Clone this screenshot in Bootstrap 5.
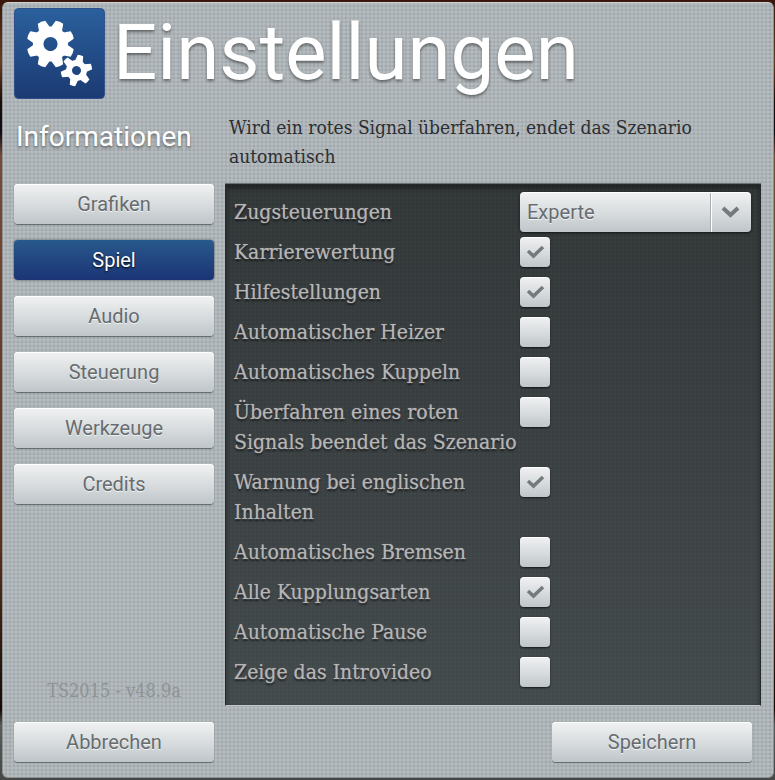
<!DOCTYPE html>
<html lang="de">
<head>
<meta charset="utf-8">
<meta name="viewport" content="width=device-width, initial-scale=1">
<title>Einstellungen</title>
<link rel="stylesheet" href="https://cdn.jsdelivr.net/npm/bootstrap@5.3.0/dist/css/bootstrap.min.css">
<style>
:root {
  --ui-font: Roboto, "Open Sans", sans-serif;
  --text-font: "DejaVu Serif Condensed", "DejaVu Serif", serif;
  --metal: linear-gradient(#f0f1f2, #d9dddf 50%, #bfc6c9);
}
body {
  font-family: var(--text-font);
  background: linear-gradient(#3a160c, #6b3a20 8%, #1a0d0a 13%, #0d0c14 17%, #7a4a38 20%, #5a3018 70%, #160a06 91%, #5a5b5b 93%, #454747);
}
.settings-window {
  min-height: calc(100vh - 4px);
  margin: 2px 1px 2px 2px;
  padding: 5px 12px 15px 11px;
  border: 1px solid #8c9294;
  border-top-color: #d0d3d2;
  border-radius: 6px;
  background:
    radial-gradient(circle at 1px 1px, #ffffff1c 1px, transparent 2px) 0 0 / 4px 4px,
    radial-gradient(circle at 3px 3px, #0000000f 1px, transparent 2px) 0 0 / 4px 4px,
    #adb4b7;
}
.app-icon { width: 91px; height: 91px; }
.app-title {
  font: 400 78px/90px var(--ui-font);
  color: #fff;
  text-shadow: 0 2px 3px #00000070;
}
.layout {
  display: grid;
  grid-template-columns: 200px minmax(0, 1fr);
  column-gap: 11px;
}
.main-area { padding-top: 14px; }
.side-title {
  padding: 4px 0 0 2px;
  font: 400 28px/40px var(--ui-font);
  color: #fff;
  text-shadow: 0 2px 3px #00000070;
}
.hint { margin-bottom: 13px; font-size: 19px; line-height: 29px; color: #2b2e32; }
.metal-btn {
  --bs-btn-color: #666c6f;
  --bs-btn-hover-color: #505659;
  --bs-btn-border-width: 0;
  --bs-btn-border-radius: 4px;
  height: 40px;
  padding: 0;
  font: 400 20px/40px var(--ui-font);
  background: var(--metal);
  text-shadow: 0 1px 0 #ffffffb0;
  box-shadow: inset 0 1px 0 #fff, 0 1px 1px #5e686c;
}
.metal-btn.active {
  --bs-btn-active-color: #fff;
  background: linear-gradient(#28598c, #1b3475);
  text-shadow: 0 1px 2px #000;
  box-shadow: 0 0 2px #303b42;
}
.version { font-size: 18px; line-height: 30px; color: #8d9396; }
.options {
  padding: 7px 9px 13px 8px;
  border: 1px solid #252a2c;
  border-bottom-color: #c2c8ca;
  background:
    radial-gradient(circle at 1px 1px, #ffffff06 1px, transparent 2px) 0 0 / 4px 4px,
    linear-gradient(#313637, #434a4c);
  box-shadow: inset 0 3px 5px #00000066, 0 -1px 0 #6c7375;
}
.option-row {
  display: grid;
  grid-template-columns: 286px minmax(0, 1fr);
  padding: 5px 0;
}
.option-row.has-select { padding: 0; }
.option-row label {
  font-size: 21px;
  line-height: 30px;
  color: #b5b5b5;
  text-shadow: 0 0 1px #b5b5b5a0, 0 2px 2px #0009;
}
.option-row.has-select label { line-height: 40px; }
.tick {
  appearance: none;
  width: 30px;
  height: 30px;
  border-radius: 4px;
  background: var(--metal);
  box-shadow: inset 0 1px 0 #fff, 0 1px 2px #000a;
}
.tick:checked {
  background: url("data:image/svg+xml,%3Csvg xmlns='http://www.w3.org/2000/svg' viewBox='0 0 30 30'%3E%3Cpath d='M8 14l5.500 5L23 10' fill='none' stroke='%23737b7e' stroke-width='3.500'/%3E%3C/svg%3E"), var(--metal);
}
.metal-select {
  height: 40px;
  padding: 0 48px 0 7px;
  border: 0;
  border-radius: 4px;
  color: #666c6f;
  font: 400 20px/38px var(--ui-font);
  text-shadow: 0 1px 0 #ffffffb0;
  background:
    url("data:image/svg+xml,%3Csvg xmlns='http://www.w3.org/2000/svg' viewBox='0 0 41 40'%3E%3Cpath d='M.5 0v40' stroke='%23a9b0b3'/%3E%3Cpath d='M1.500 0v40' stroke='white'/%3E%3Cpath d='M13 16l7.500 7L28 16' fill='none' stroke='%23737b7e' stroke-width='4'/%3E%3C/svg%3E") right / 41px 40px no-repeat,
    var(--metal);
  box-shadow: inset 0 1px 0 #fff, 0 1px 3px #000a;
}
.save-btn { width: 200px; margin-right: 9px; }
</style>
</head>
<body>
<main class="settings-window d-flex flex-column">
  <header class="d-flex align-items-start">
    <svg class="app-icon flex-shrink-0" viewBox="0 0 91 91" aria-hidden="true">
      <defs>
        <linearGradient id="blue" x2="0" y2="1"><stop stop-color="#2a609c"/><stop offset="1" stop-color="#1b3a73"/></linearGradient>
        <path id="tooth" d="M-6-15L-4-23.500Q0-24.500 4-23.500L6-15z"/>
        <path id="small-tooth" d="M-4-9L-2.800-15.500Q0-16 2.800-15.500L4-9z"/>
      </defs>
      <rect x=".5" y=".5" width="90" height="90" rx="4" fill="url(#blue)" stroke="#31508c"/>
      <g transform="translate(36.500 36) rotate(22.500)" fill="#fff">
        <circle r="12.300" fill="none" stroke="#fff" stroke-width="10.500"/>
        <use href="#tooth"/><use href="#tooth" transform="rotate(45)"/><use href="#tooth" transform="rotate(90)"/><use href="#tooth" transform="rotate(135)"/><use href="#tooth" transform="rotate(180)"/><use href="#tooth" transform="rotate(225)"/><use href="#tooth" transform="rotate(270)"/><use href="#tooth" transform="rotate(315)"/>
      </g>
      <g transform="translate(62.500 62.500) rotate(15)">
        <circle r="7.500" fill="none" stroke="#fff" stroke-width="6"/>
        <g fill="#fff"><use href="#small-tooth"/><use href="#small-tooth" transform="rotate(60)"/><use href="#small-tooth" transform="rotate(120)"/><use href="#small-tooth" transform="rotate(180)"/><use href="#small-tooth" transform="rotate(240)"/><use href="#small-tooth" transform="rotate(300)"/></g>
      </g>
    </svg>
    <h1 class="app-title mb-0 ms-2">Einstellungen</h1>
  </header>

  <div class="layout main-area flex-grow-1">
    <h2 class="side-title mb-0">Informationen</h2>
    <p class="hint ps-1">Wird ein rotes Signal überfahren, endet das Szenario automatisch</p>

    <nav class="d-flex flex-column gap-3" aria-label="Bereiche">
      <button type="button" class="btn metal-btn">Grafiken</button>
      <button type="button" class="btn metal-btn active" aria-current="page">Spiel</button>
      <button type="button" class="btn metal-btn">Audio</button>
      <button type="button" class="btn metal-btn">Steuerung</button>
      <button type="button" class="btn metal-btn">Werkzeuge</button>
      <button type="button" class="btn metal-btn">Credits</button>
      <div class="version mt-auto text-center">TS2015 - v48.9a</div>
    </nav>

    <form id="game-options" class="options">
      <div class="option-row has-select"><label for="o1">Zugsteuerungen</label><select id="o1" class="form-select metal-select"><option>Experte</option></select></div>
      <div class="option-row"><label for="o2">Karrierewertung</label><input id="o2" class="tick" type="checkbox" checked></div>
      <div class="option-row"><label for="o3">Hilfestellungen</label><input id="o3" class="tick" type="checkbox" checked></div>
      <div class="option-row"><label for="o4">Automatischer Heizer</label><input id="o4" class="tick" type="checkbox"></div>
      <div class="option-row"><label for="o5">Automatisches Kuppeln</label><input id="o5" class="tick" type="checkbox"></div>
      <div class="option-row"><label for="o6">Überfahren eines roten Signals beendet das Szenario</label><input id="o6" class="tick" type="checkbox"></div>
      <div class="option-row"><label for="o7">Warnung bei englischen Inhalten</label><input id="o7" class="tick" type="checkbox" checked></div>
      <div class="option-row"><label for="o8">Automatisches Bremsen</label><input id="o8" class="tick" type="checkbox"></div>
      <div class="option-row"><label for="o9">Alle Kupplungsarten</label><input id="o9" class="tick" type="checkbox" checked></div>
      <div class="option-row"><label for="o10">Automatische Pause</label><input id="o10" class="tick" type="checkbox"></div>
      <div class="option-row"><label for="o11">Zeige das Introvideo</label><input id="o11" class="tick" type="checkbox"></div>
    </form>
  </div>

  <footer class="layout pt-3">
    <button type="button" class="btn metal-btn">Abbrechen</button>
    <button type="submit" form="game-options" class="btn metal-btn save-btn ms-auto">Speichern</button>
  </footer>
</main>
<script src="https://cdn.jsdelivr.net/npm/bootstrap@5.3.0/dist/js/bootstrap.bundle.min.js"></script>
</body>
</html>
